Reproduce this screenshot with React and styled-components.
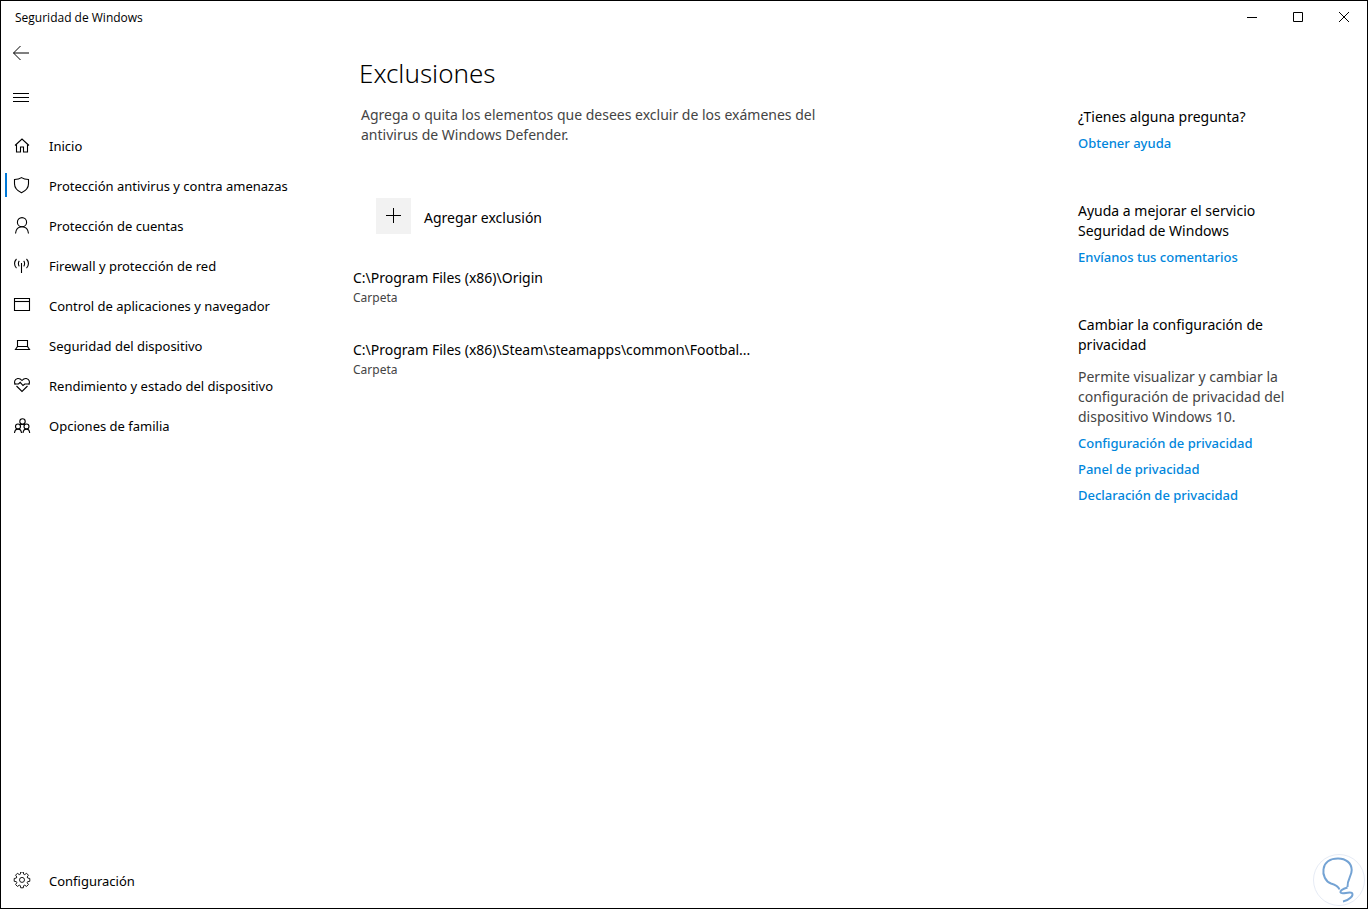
import React from "react";
import styled, { createGlobalStyle } from "styled-components";

const GlobalStyle = createGlobalStyle`
  *, *::before, *::after { box-sizing: border-box; }
  body {
    margin: 0;
    background: #fff;
    color: #000;
    font-family: "Segoe UI", "Noto Sans", "Open Sans", sans-serif;
    font-size: 14px;
    line-height: 20px;
  }
  h1, h2, p, ul { margin: 0; padding: 0; }
  ul { list-style: none; }
  button { font: inherit; color: inherit; background: none; border: 0; padding: 0; }
  svg { display: block; flex: none; }
`;

const Window = styled.div`
  position: relative;
  display: flex;
  flex-direction: column;
  min-height: 100vh;
  border: 1px solid #000;
`;

const TitleBar = styled.header`
  display: flex;
  justify-content: space-between;
  align-items: flex-start;
  height: 32px;
`;

const WindowName = styled.span`
  padding: 7px 0 0 14px;
  font-family: "Segoe UI", "Open Sans", sans-serif;
  font-size: 12px;
`;

const Caption = styled.div`
  display: flex;
`;

const CaptionButton = styled.button`
  display: flex;
  align-items: center;
  justify-content: center;
  width: 46px;
  height: 32px;
`;

const Body = styled.div`
  flex: 1;
  display: grid;
  grid-template-columns: 352px minmax(0, 1fr) 290px;
`;

const Sidebar = styled.nav`
  display: flex;
  flex-direction: column;
  padding-bottom: 7px;
`;

const ToolButton = styled.button`
  display: flex;
  align-items: center;
  justify-content: center;
  width: 40px;
  height: 40px;
  margin-bottom: 4px;
`;

const NavList = styled.ul`
  margin-top: 5px;
  &:last-child { margin-top: auto; }
`;

const NavLink = styled.a`
  display: flex;
  align-items: center;
  gap: 18px;
  height: 40px;
  padding-left: 12px;
  font-size: 13px;
  color: #000;
  text-decoration: none;
  background: ${(p) =>
    p.$active ? "linear-gradient(#0078d7, #0078d7) 4px 7px / 2px 24px no-repeat" : "none"};
`;

const Main = styled.main`
  padding-top: 22px;
`;

const Intro = styled.section`
  padding-left: 6px;
`;

const Title = styled.h1`
  font-size: 26px;
  font-weight: 300;
  line-height: 36px;
`;

const Lead = styled.p`
  max-width: 480px;
  margin-top: 14px;
  padding-left: 2px;
  color: #444;
`;

const AddButton = styled.button`
  display: flex;
  align-items: center;
  gap: 13px;
  margin: 53px 0 34px 23px;
`;

const AddIcon = styled.span`
  display: flex;
  align-items: center;
  justify-content: center;
  width: 35px;
  height: 36px;
  background: #f2f2f2;
`;

const AddLabel = styled.span`
  padding-top: 3px;
`;

const ExclusionList = styled.ul`
  display: flex;
  flex-direction: column;
  gap: 32px;
`;

const Path = styled.p`
  white-space: nowrap;
`;

const Kind = styled.p`
  font-size: 12px;
  color: #444;
`;

const Aside = styled.aside`
  display: flex;
  flex-direction: column;
  gap: 48px;
  padding: 74px 70px 0 1px;
`;

const HelpSection = styled.section`
  display: flex;
  flex-direction: column;
  align-items: flex-start;
  gap: 6px;
`;

const HelpTitle = styled.h2`
  font-size: 14px;
  font-weight: 400;
`;

const HelpText = styled.p`
  padding-top: 6px;
  color: #444;
`;

const HelpLink = styled.a`
  font-size: 13px;
  font-weight: 500;
  color: #0086dc;
  text-decoration: none;
`;

const Badge = styled.svg`
  position: absolute;
  right: 2px;
  bottom: 2px;
`;

const Icon = ({ children, size = 18, width = 1.1 }) => (
  <svg
    width={size}
    height={size}
    viewBox={`0 0 ${size} ${size}`}
    fill="none"
    stroke="#000"
    strokeWidth={width}
    aria-hidden="true"
  >
    {children}
  </svg>
);

const icons = {
  home: (
    <>
      <path d="M2 8.500 9 2l7 6.500" />
      <path d="M3.500 7.500v7.500h4v-5h3v5h4V7.500" />
    </>
  ),
  shield: <path d="M8.500 .6C6.500 2 4.200 2.500 1.500 2.500v4.200c0 4.200 2.800 7 7 9 4.200-2 7-4.800 7-9V2.500C12.800 2.500 10.500 2 8.500 .6Z" />,
  person: (
    <>
      <circle cx="9" cy="5.200" r="4.600" />
      <path d="M2.500 16.500c.4-4 3-6.700 6.500-6.700s6.100 2.700 6.500 6.700" />
    </>
  ),
  network: (
    <>
      <path d="M8.500 6v10" />
      <path d="M6.300 3.800c-1.200 1.300-1.200 4.200 0 5.500M10.700 3.800c1.200 1.300 1.200 4.200 0 5.500" />
      <path d="M3.500 2c-2.600 2.500-2.600 6.600 0 9.100M13.500 2c2.600 2.500 2.600 6.600 0 9.100" />
    </>
  ),
  browser: (
    <>
      <path d="M1.500 1.500h15v12h-15z" />
      <path d="M1.500 4.500h15" />
    </>
  ),
  laptop: (
    <>
      <path d="M4.500 3.500h10v6h-10z" />
      <path d="m4.500 9.500-2 3h14l-2-3" />
    </>
  ),
  heart: (
    <>
      <path d="M2.300 7.500C.8 5.300 1.500 2 4.700 1.500 6.800 1.200 8 2.300 9 3.500c1-1.200 2.200-2.300 4.300-2C16.500 2 17.200 5.300 15.700 7.500" />
      <path d="m3.500 9 5.500 5.500L14.500 9" />
      <path d="M1.300 7h4.200l1.700-1.700L10 8.500l1.800-1.500h4.900" />
    </>
  ),
  family: (
    <>
      <circle cx="9.500" cy="4.500" r="2.700" />
      <circle cx="5" cy="9.500" r="2.500" />
      <circle cx="13.500" cy="9.500" r="2.500" />
      <path d="M1.500 16c.2-2.400 1.500-3.900 3.500-3.900S8.300 13.600 8.500 16M10 16c.2-2.400 1.500-3.900 3.500-3.900s3 1.500 3.200 3.900M6.700 8.200C7.300 7.500 8.300 7.200 9.500 7.200s1.800.3 2.300.8" />
    </>
  ),
  gear: (
    <>
      <path
        d="M7.300 2.200 7.700 0h2.600l.4 2.200 1 .4 1.900-1.300 1.800 1.900-1.200 1.800.4 1L16.800 6.500v2.800l-2.200.4-.4 1 1.200 1.900-1.800 1.800-1.900-1.200-1 .4-.4 2.200H7.700l-.4-2.200-1-.4-1.900 1.200-1.800-1.800 1.200-1.900-.4-1-2.200-.4V6.500L3.400 6l.4-1L2.600 3.200l1.800-1.900 1.900 1.300Z"
        strokeLinejoin="round"
      />
      <circle cx="9" cy="7.900" r="2.500" />
    </>
  ),
};

const sections = [
  ["home", "Inicio"],
  ["shield", "Protección antivirus y contra amenazas"],
  ["person", "Protección de cuentas"],
  ["network", "Firewall y protección de red"],
  ["browser", "Control de aplicaciones y navegador"],
  ["laptop", "Seguridad del dispositivo"],
  ["heart", "Rendimiento y estado del dispositivo"],
  ["family", "Opciones de familia"],
];

const exclusions = [
  "C:\\Program Files (x86)\\Origin",
  "C:\\Program Files (x86)\\Steam\\steamapps\\common\\Footbal...",
];

const NavItem = ({ icon, label, active }) => (
  <li>
    <NavLink href="#" $active={active} aria-current={active ? "page" : undefined}>
      <Icon width={icon === "gear" ? 0.9 : 1.1}>{icons[icon]}</Icon>
      {label}
    </NavLink>
  </li>
);

export default function App() {
  return (
    <>
      <GlobalStyle />
      <Window>
        <TitleBar>
          <WindowName>Seguridad de Windows</WindowName>
          <Caption>
            <CaptionButton aria-label="Minimizar">
              <Icon size={12} width={1}><path d="M1 6.500h10" /></Icon>
            </CaptionButton>
            <CaptionButton aria-label="Maximizar">
              <Icon size={12} width={1}><path d="M1.500 1.500h9v9h-9z" /></Icon>
            </CaptionButton>
            <CaptionButton aria-label="Cerrar">
              <Icon size={12} width={1}><path d="m1 1 10 10M11 1 1 11" /></Icon>
            </CaptionButton>
          </Caption>
        </TitleBar>
        <Body>
          <Sidebar>
            <ToolButton aria-label="Atrás">
              <Icon width={1}><path d="M1.500 9H17M8.500 2 1.500 9l7 7" /></Icon>
            </ToolButton>
            <ToolButton aria-label="Menú">
              <Icon width={1}><path d="M1 5.500h16M1 9.500h16M1 13.500h16" /></Icon>
            </ToolButton>
            <NavList>
              {sections.map(([icon, label]) => (
                <NavItem key={icon} icon={icon} label={label} active={icon === "shield"} />
              ))}
            </NavList>
            <NavList>
              <NavItem icon="gear" label="Configuración" />
            </NavList>
          </Sidebar>
          <Main>
            <Intro>
              <Title>Exclusiones</Title>
              <Lead>
                Agrega o quita los elementos que desees excluir de los exámenes del antivirus de
                Windows Defender.
              </Lead>
            </Intro>
            <AddButton>
              <AddIcon>
                <Icon width={1}><path d="M1 8.500h15M8.500 1v15" /></Icon>
              </AddIcon>
              <AddLabel>Agregar exclusión</AddLabel>
            </AddButton>
            <ExclusionList>
              {exclusions.map((path) => (
                <li key={path}>
                  <Path>{path}</Path>
                  <Kind>Carpeta</Kind>
                </li>
              ))}
            </ExclusionList>
          </Main>
          <Aside>
            <HelpSection>
              <HelpTitle>¿Tienes alguna pregunta?</HelpTitle>
              <HelpLink href="#">Obtener ayuda</HelpLink>
            </HelpSection>
            <HelpSection>
              <HelpTitle>Ayuda a mejorar el servicio Seguridad de Windows</HelpTitle>
              <HelpLink href="#">Envíanos tus comentarios</HelpLink>
            </HelpSection>
            <HelpSection>
              <HelpTitle>Cambiar la configuración de privacidad</HelpTitle>
              <HelpText>
                Permite visualizar y cambiar la configuración de privacidad del dispositivo Windows
                10.
              </HelpText>
              <HelpLink href="#">Configuración de privacidad</HelpLink>
              <HelpLink href="#">Panel de privacidad</HelpLink>
              <HelpLink href="#">Declaración de privacidad</HelpLink>
            </HelpSection>
          </Aside>
        </Body>
        <Badge width="52" height="52" viewBox="0 0 52 52" fill="none" aria-hidden="true">
          <circle cx="26" cy="26" r="25.500" fill="#fff" stroke="#e6ebf5" />
          <path
            d="M26.500 35.500C25 31.500 21.500 30.500 18 29.500 12.500 27.500 9.500 21 10.500 15 11.500 8 17.500 4.500 25 4.500 33 4.500 38.500 9 38.700 16 38.900 22 34 25.500 34.500 33"
            stroke="#74a3d4"
            strokeWidth="2"
          />
          <path
            d="M34.500 33.500C31 34.500 27 36 27.500 38.500 28.500 41 36.500 37 39 39 41 41.500 36 46.500 30 47.500"
            stroke="#74a3d4"
            strokeWidth="2"
          />
        </Badge>
      </Window>
    </>
  );
}
